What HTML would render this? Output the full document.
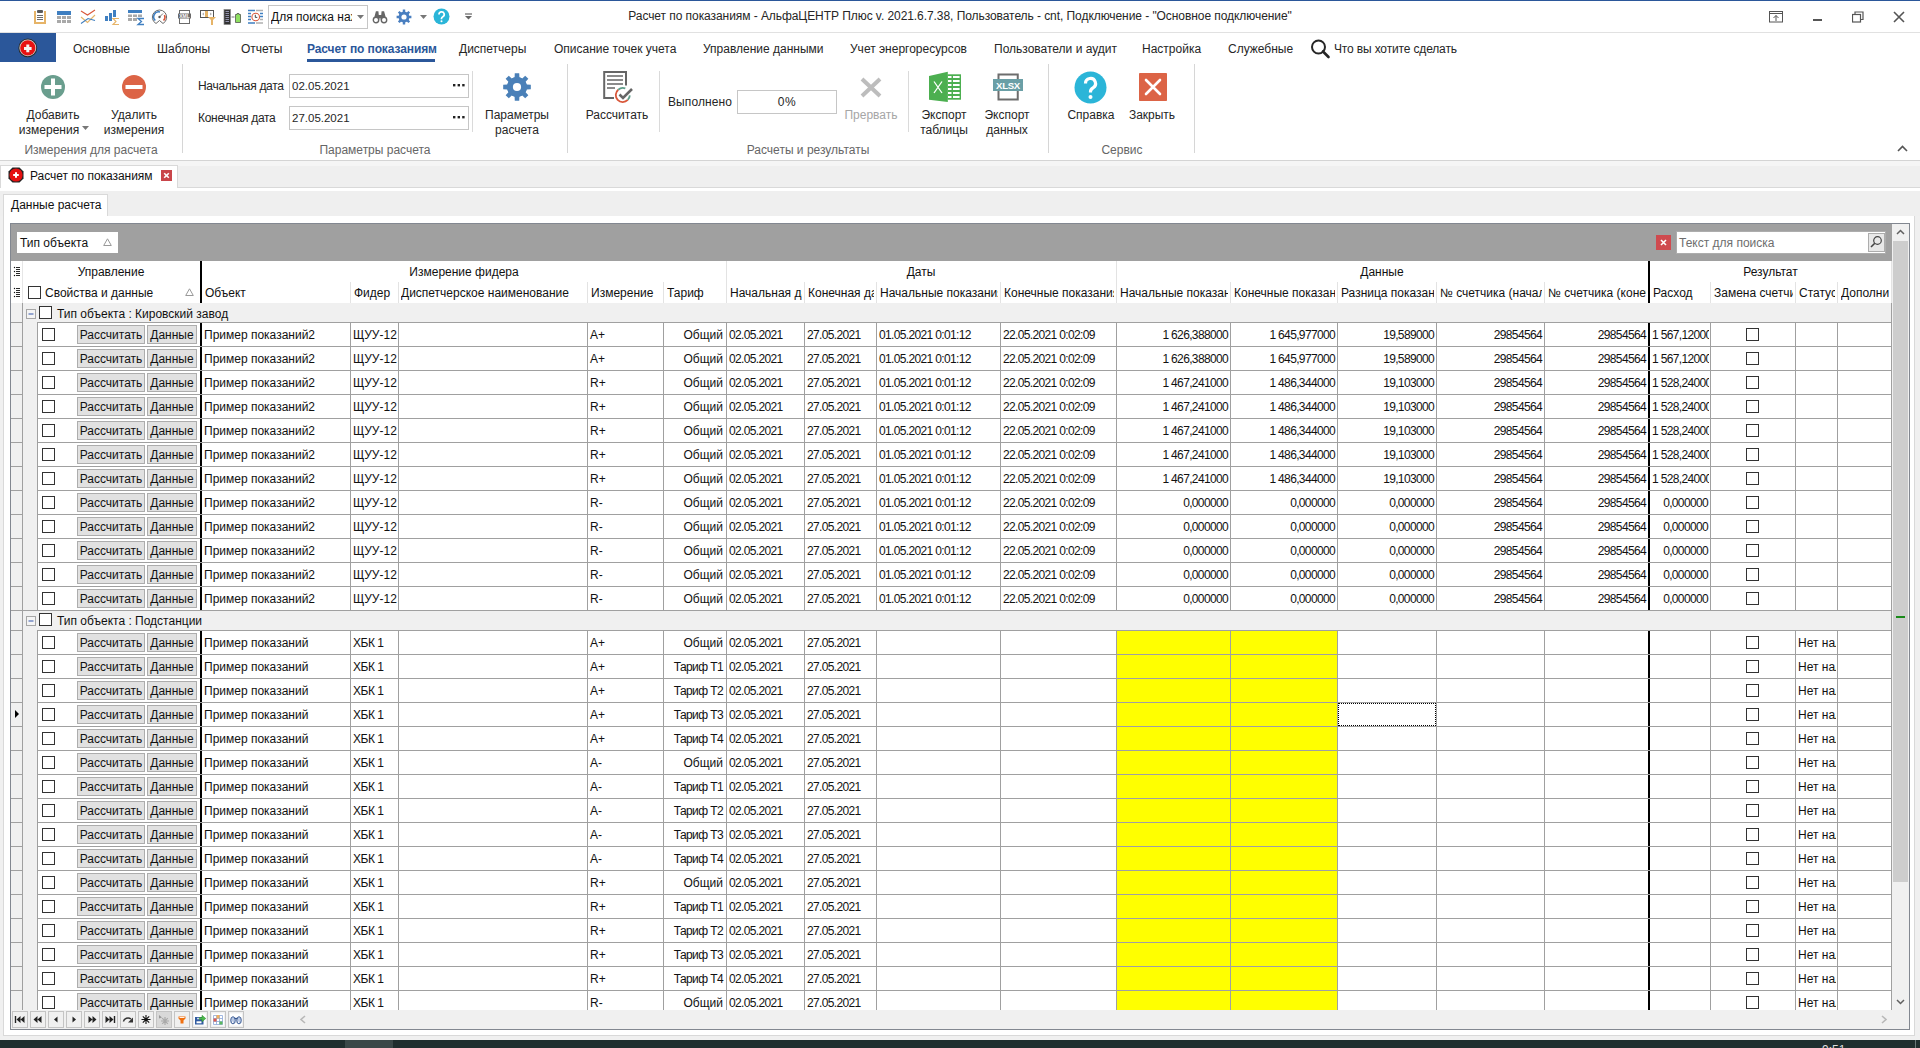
<!DOCTYPE html><html><head><meta charset="utf-8"><style>
*{margin:0;padding:0;box-sizing:content-box}
html,body{width:1920px;height:1048px;overflow:hidden;background:#f0f0f0;font-family:"Liberation Sans",sans-serif}
body>div,body>svg{position:absolute}
div div,div svg{position:absolute}
.t{position:absolute;white-space:nowrap;font-size:12px;line-height:16px;color:#111}
.n{font-size:12px;letter-spacing:-0.65px}
.btn{position:absolute;height:17px;border:1px solid #adadad;background:#e1e1e1;font-size:12px;line-height:19px;text-align:center;color:#111;white-space:nowrap;overflow:hidden}
</style></head><body>
<div style="left:0;top:161px;width:1920px;height:5px;background:#f5f5f5"></div>
<div style="left:0;top:166px;width:1920px;height:22px;background:#efefef"></div>
<div style="left:0;top:187px;width:1920px;height:1px;background:#d9d9d9"></div>
<div style="left:0;top:165px;width:177px;height:23px;background:#fff;border-top:1px solid #d9d9d9;border-right:1px solid #d9d9d9"></div>
<div style="left:0;top:165px;width:1px;height:24px;background:#d9d9d9"></div>
<svg style="left:7px;top:166px" width="18" height="18" viewBox="0 0 18 18"><path d="M5.5 1.5h7l4 4v7l-4 4h-7l-4-4v-7z" fill="#222"/><circle cx="9" cy="9" r="6.6" fill="#e51010"/><path d="M8 6.2h2v1.8h1.8v2H10v1.8H8V10H6.2V8H8z" fill="#fff"/></svg>
<div class="t" style="left:30px;top:168px;font-size:12px;color:#111;letter-spacing:-0.05px">Расчет по показаниям</div>
<svg style="left:161px;top:170px" width="11" height="11" viewBox="0 0 11 11"><rect width="11" height="11" fill="#c9454a"/><path d="M3.2 3.2l4.6 4.6M7.8 3.2L3.2 7.8" stroke="#fff" stroke-width="1.6"/></svg>
<div style="left:0;top:188px;width:1920px;height:3px;background:#fff"></div>
<div style="left:0;top:191px;width:1920px;height:25px;background:#efefef"></div>
<div style="left:3px;top:216px;width:1912px;height:1px;background:#d9d9d9"></div>
<div style="left:3px;top:194px;width:103px;height:23px;background:#fff;border:1px solid #d9d9d9;border-bottom:none"></div>
<div class="t" style="left:11px;top:197px;font-size:12px;color:#111">Данные расчета</div>
<div style="left:3px;top:216px;width:1910px;height:819px;background:#fff;border:1px solid #d9d9d9;border-top:none"></div>
<div style="left:0;top:1040px;width:1920px;height:8px;background:#1f2e2e"></div>
<div style="left:345px;top:1040px;width:48px;height:8px;background:#3a4848"></div>
<div style="left:1915px;top:1040px;width:1px;height:8px;background:#6a7878"></div>
<div class="t" style="left:1822px;top:1042px;font-size:12px;color:#ddd">9:51</div>
<div style="left:0;top:0;width:1920px;height:1px;background:#2b579a"></div>
<div style="left:0;top:1px;width:1920px;height:159px;background:#fff"></div>
<div style="left:0;top:32px;width:1920px;height:1px;background:#e1e1e1"></div>
<div style="left:0;top:160px;width:1920px;height:1px;background:#d4d4d4"></div>
<div class="t" style="left:460px;top:8px;width:1000px;text-align:center;font-size:12px;color:#262626;letter-spacing:-0.065px">Расчет по показаниям - АльфаЦЕНТР Плюс v. 2021.6.7.38, Пользователь - cnt, Подключение - "Основное подключение"</div>
<div style="left:0;top:33px;width:56px;height:29px;background:#2b579a"></div>
<svg style="left:18px;top:38px" width="20" height="20" viewBox="0 0 20 20"><circle cx="9.8" cy="9.9" r="9.4" fill="#2a2a2a"/><circle cx="9.8" cy="9.9" r="8.4" fill="#d8d8d8"/><circle cx="9.8" cy="9.9" r="7.6" fill="#e81212"/><path d="M8.3 6.6h3v2.3h2.3v3h-2.3v2.3h-3v-2.3H6v-3h2.3z" fill="#f4f4f4"/></svg>
<div class="t" style="left:73px;top:41px;font-size:12px;color:#262626">Основные</div>
<div class="t" style="left:157px;top:41px;font-size:12px;color:#262626">Шаблоны</div>
<div class="t" style="left:241px;top:41px;font-size:12px;color:#262626">Отчеты</div>
<div class="t" style="left:459px;top:41px;font-size:12px;color:#262626">Диспетчеры</div>
<div class="t" style="left:554px;top:41px;font-size:12px;color:#262626">Описание точек учета</div>
<div class="t" style="left:703px;top:41px;font-size:12px;color:#262626">Управление данными</div>
<div class="t" style="left:850px;top:41px;font-size:12px;color:#262626">Учет энергоресурсов</div>
<div class="t" style="left:994px;top:41px;font-size:12px;color:#262626">Пользователи и аудит</div>
<div class="t" style="left:1142px;top:41px;font-size:12px;color:#262626">Настройка</div>
<div class="t" style="left:1228px;top:41px;font-size:12px;color:#262626">Служебные</div>
<div class="t" style="left:307px;top:41px;font-size:12px;color:#2b579a;font-weight:bold;letter-spacing:-0.1px">Расчет по показаниям</div>
<div style="left:307px;top:59px;width:128px;height:3px;background:#2b579a"></div>
<svg style="left:1310px;top:39px" width="22" height="20" viewBox="0 0 22 20"><circle cx="8.5" cy="8" r="6.5" fill="none" stroke="#262626" stroke-width="2"/><path d="M13 12.5l5.5 5.5" stroke="#262626" stroke-width="2.6" stroke-linecap="round"/></svg>
<div class="t" style="left:1334px;top:41px;font-size:12px;color:#262626;letter-spacing:-0.15px">Что вы хотите сделать</div>
<div style="left:182px;top:64px;width:1px;height:89px;background:#d6d6d6"></div>
<div style="left:567px;top:64px;width:1px;height:89px;background:#d6d6d6"></div>
<div style="left:1048px;top:64px;width:1px;height:89px;background:#d6d6d6"></div>
<div style="left:1194px;top:64px;width:1px;height:89px;background:#d6d6d6"></div>
<div style="left:472px;top:71px;width:1px;height:61px;background:#dadada"></div>
<div style="left:659px;top:71px;width:1px;height:61px;background:#dadada"></div>
<div style="left:908px;top:71px;width:1px;height:61px;background:#dadada"></div>
<div class="t" style="left:-59px;top:142px;width:300px;text-align:center;font-size:12px;color:#666">Измерения для расчета</div>
<div class="t" style="left:225px;top:142px;width:300px;text-align:center;font-size:12px;color:#666">Параметры расчета</div>
<div class="t" style="left:658px;top:142px;width:300px;text-align:center;font-size:12px;color:#666">Расчеты и результаты</div>
<div class="t" style="left:972px;top:142px;width:300px;text-align:center;font-size:12px;color:#666">Сервис</div>
<svg style="left:40px;top:74px" width="26" height="26" viewBox="0 0 26 26"><circle cx="13" cy="13" r="12" fill="#6a9e8e"/><rect x="4.5" y="11" width="17" height="4" fill="#fff"/><rect x="11" y="4.5" width="4" height="17" fill="#fff"/></svg>
<div class="t" style="left:-97px;top:107px;width:300px;text-align:center;font-size:12px;color:#262626">Добавить</div>
<div class="t" style="left:-101px;top:122px;width:300px;text-align:center;font-size:12px;color:#262626">измерения</div>
<svg style="left:82px;top:126px" width="7" height="4" viewBox="0 0 7 4"><path d="M0 0h7L3.5 4z" fill="#777"/></svg>
<svg style="left:121px;top:74px" width="26" height="26" viewBox="0 0 26 26"><circle cx="13" cy="13" r="12" fill="#dc6446"/><rect x="4.5" y="11" width="17" height="4" fill="#fff"/></svg>
<div class="t" style="left:-16px;top:107px;width:300px;text-align:center;font-size:12px;color:#262626">Удалить</div>
<div class="t" style="left:-16px;top:122px;width:300px;text-align:center;font-size:12px;color:#262626">измерения</div>
<div class="t" style="left:198px;top:78px;font-size:12px;color:#262626;letter-spacing:-0.3px">Начальная дата</div>
<div class="t" style="left:198px;top:110px;font-size:12px;color:#262626;letter-spacing:-0.3px">Конечная дата</div>
<div style="left:289px;top:74px;width:178px;height:22px;border:1px solid #c6c6c6;background:#fff"></div>
<div class="t num" style="left:292px;top:78px;font-size:11.5px;color:#262626">02.05.2021</div>
<svg style="left:453px;top:84px" width="12" height="3" viewBox="0 0 12 3"><rect x="0" y="0" width="2.4" height="2.4" fill="#222"/><rect x="4.6" y="0" width="2.4" height="2.4" fill="#222"/><rect x="9.2" y="0" width="2.4" height="2.4" fill="#222"/></svg>
<div style="left:289px;top:106px;width:178px;height:22px;border:1px solid #c6c6c6;background:#fff"></div>
<div class="t num" style="left:292px;top:110px;font-size:11.5px;color:#262626">27.05.2021</div>
<svg style="left:453px;top:116px" width="12" height="3" viewBox="0 0 12 3"><rect x="0" y="0" width="2.4" height="2.4" fill="#222"/><rect x="4.6" y="0" width="2.4" height="2.4" fill="#222"/><rect x="9.2" y="0" width="2.4" height="2.4" fill="#222"/></svg>
<svg style="left:502px;top:72px" width="30" height="30" viewBox="0 0 30 30"><path d="M24.79 12.60 L28.82 12.77 L28.82 17.23 L24.79 17.40 L23.62 20.23 L26.35 23.20 L23.20 26.35 L20.23 23.62 L17.40 24.79 L17.23 28.82 L12.77 28.82 L12.60 24.79 L9.77 23.62 L6.80 26.35 L3.65 23.20 L6.38 20.23 L5.21 17.40 L1.18 17.23 L1.18 12.77 L5.21 12.60 L6.38 9.77 L3.65 6.80 L6.80 3.65 L9.77 6.38 L12.60 5.21 L12.77 1.18 L17.23 1.18 L17.40 5.21 L20.23 6.38 L23.20 3.65 L26.35 6.80 L23.62 9.77Z" fill="#4a80b8"/><circle cx="15" cy="15" r="9.88" fill="#4a80b8"/><circle cx="15" cy="15" r="4.1" fill="#fff"/></svg>
<div class="t" style="left:367px;top:107px;width:300px;text-align:center;font-size:12px;color:#262626">Параметры</div>
<div class="t" style="left:367px;top:122px;width:300px;text-align:center;font-size:12px;color:#262626">расчета</div>
<svg style="left:600px;top:70px" width="34" height="34" viewBox="0 0 34 34"><path d="M14 28H4.2V2H26v13.5" fill="none" stroke="#666" stroke-width="2"/><path d="M7 6h16M7 10h16M7 14h16M7 18h8" stroke="#666" stroke-width="1.6"/><path d="M27.75 29.95A7 7 0 1 1 18.21 19.72" fill="none" stroke="#d9573a" stroke-width="1.8"/><path d="M18.21 19.72A7 7 0 0 1 25.31 18.46" fill="none" stroke="#5f9e8a" stroke-width="1.8"/><path d="M29.79 25.37A7 7 0 0 1 27.75 29.95" fill="none" stroke="#5f9e8a" stroke-width="1.8"/><path d="M19.5 24.5l3.5 3.5 9-9" fill="none" stroke="#666" stroke-width="2.6"/></svg>
<div class="t" style="left:467px;top:107px;width:300px;text-align:center;font-size:12px;color:#262626">Рассчитать</div>
<div class="t" style="left:668px;top:94px;font-size:12px;color:#262626;letter-spacing:0.1px">Выполнено</div>
<div style="left:737px;top:90px;width:98px;height:22px;border:1px solid #c6c6c6;background:#fff"></div>
<div class="t" style="left:737px;top:94px;width:100px;text-align:center;font-size:12px;color:#262626;letter-spacing:0.5px">0%</div>
<svg style="left:860px;top:77px" width="22" height="21" viewBox="0 0 22 21"><path d="M2 2l18 17M20 2L2 19" stroke="#bdbdbd" stroke-width="4"/></svg>
<div class="t" style="left:721px;top:107px;width:300px;text-align:center;font-size:12px;color:#a6a6a6">Прервать</div>
<svg style="left:928px;top:71px" width="34" height="32" viewBox="0 0 34 32"><rect x="19.5" y="3.3" width="13.5" height="25.4" fill="#4caf50"/><path d="M20 5h3.5v2H20zM25 5h6.6v2H25zM20 9h3.5v2H20zM25 9h6.6v2H25zM20 13h3.5v2H20zM25 13h6.6v2H25zM20 17h3.5v2H20zM25 17h6.6v2H25zM20 21h3.5v2H20zM25 21h6.6v2H25zM20 25h3.5v2H20zM25 25h6.6v2H25z" fill="#fff"/><path d="M1 5L19.8 0.8V30.9L1 28.7z" fill="#4caf50"/><path d="M6 10.5l8 11.5M14 10.5l-8 11.5" stroke="#fff" stroke-width="1.3"/></svg>
<div class="t" style="left:794px;top:107px;width:300px;text-align:center;font-size:12px;color:#262626">Экспорт</div>
<div class="t" style="left:794px;top:122px;width:300px;text-align:center;font-size:12px;color:#262626">таблицы</div>
<svg style="left:991px;top:72px" width="34" height="30" viewBox="0 0 34 30"><rect x="7.5" y="2.5" width="19.25" height="25" fill="#fff" stroke="#6d6d6d" stroke-width="2"/><rect x="2" y="7" width="30" height="12" fill="#6a9fa6"/><text x="17" y="17.3" font-family="Liberation Sans" font-weight="bold" font-size="9.6" letter-spacing="-0.3" fill="#fff" text-anchor="middle">XLSX</text></svg>
<div class="t" style="left:857px;top:107px;width:300px;text-align:center;font-size:12px;color:#262626">Экспорт</div>
<div class="t" style="left:857px;top:122px;width:300px;text-align:center;font-size:12px;color:#262626">данных</div>
<svg style="left:1074px;top:71px" width="33" height="33" viewBox="0 0 33 33"><circle cx="16.5" cy="16.5" r="16" fill="#2bb5d8"/><path d="M11.5 12.5a5 5 0 1 1 7.5 4.3c-1.6 1-2.5 1.8-2.5 3.7v1" fill="none" stroke="#fff" stroke-width="3.2"/><circle cx="16.5" cy="26" r="2" fill="#fff"/></svg>
<div class="t" style="left:941px;top:107px;width:300px;text-align:center;font-size:12px;color:#262626">Справка</div>
<svg style="left:1139px;top:73px" width="28" height="28" viewBox="0 0 28 28"><rect x="0" y="0" width="28" height="28" rx="0.8" fill="#dc6446"/><path d="M7 7l14 14M21 7L7 21" stroke="#fff" stroke-width="2.6" stroke-linecap="round"/></svg>
<div class="t" style="left:1002px;top:107px;width:300px;text-align:center;font-size:12px;color:#262626">Закрыть</div>
<svg style="left:1897px;top:145px" width="11" height="7" viewBox="0 0 11 7"><path d="M1 6l4.5-4.5L10 6" fill="none" stroke="#555" stroke-width="1.6"/></svg>
<svg style="left:28px;top:4px" width="120" height="26" viewBox="0 0 120 26"><path d="M6 7h2v11h8V7h2v13H6z" fill="#e6b468"/><rect x="9" y="6" width="6" height="3" rx="1" fill="#5a5a5a"/><path d="M9 11.5h6M9 13.5h6M9 15.5h6" stroke="#5a5a5a" stroke-width="0.9"/><rect x="29" y="7" width="14" height="4" fill="#3f7fc1"/><path d="M29 12h4v3h-4zM34 12h4v3h-4zM39 12h4v3h-4zM29 16h4v3h-4zM34 16h4v3h-4zM39 16h4v3h-4z" fill="#a9a9a9"/><path d="M53 7l6.5 4L67 6" fill="none" stroke="#d9573a" stroke-width="1.1"/><path d="M53 13l6.5 5.5L67 11" fill="none" stroke="#e6b468" stroke-width="1.1"/><path d="M53 19.5l7-5 7 2" fill="none" stroke="#3f7fc1" stroke-width="1.1"/><rect x="77" y="12" width="3" height="5" fill="#3f7fc1"/><rect x="81" y="9" width="3" height="8" fill="#3f7fc1"/><rect x="85" y="6" width="3" height="7" fill="#3f7fc1"/><path d="M91 14.5h-6l3 3-3 3h6" fill="none" stroke="#e6b468" stroke-width="1.1"/><rect x="100" y="6" width="14" height="3" fill="#3f7fc1"/><path d="M100 10.5h4v2.5h-4zM105 10.5h4v2.5h-4zM110 10.5h4v2.5h-4zM100 14h4v3h-4zM105 14h4v3h-4z" fill="#a9a9a9"/><path d="M116 14.5h-6l3.5 3-3.5 3h6" fill="none" stroke="#3f7fc1" stroke-width="1.3"/></svg>
<svg style="left:146px;top:4px" width="120" height="26" viewBox="0 0 120 26"><path d="M10 19.5L13.5 16.5 17 19.5A7.2 7.2 0 1 0 10 19.5z" fill="none" stroke="#6a6a6a" stroke-width="1"/><path d="M9.3 16.5A5 5 0 0 1 14 8" fill="none" stroke="#3f7fc1" stroke-width="1.6"/><path d="M18.5 11A5 5 0 0 1 17.5 16.5" fill="none" stroke="#d9573a" stroke-width="1.6"/><path d="M13.5 13L17 9.5" stroke="#555" stroke-width="0.8"/><circle cx="13.5" cy="13" r="1.2" fill="#555"/><rect x="33.5" y="6.5" width="10" height="13" fill="#fff" stroke="#6a6a6a" stroke-width="1"/><rect x="32" y="9.5" width="13" height="5" fill="#6a6a6a"/><text x="38.5" y="13.8" font-family="Liberation Sans" font-size="5" font-weight="bold" fill="#fff" text-anchor="middle">XML</text><rect x="54.5" y="6.5" width="13" height="7" fill="#fff" stroke="#555" stroke-width="1"/><rect x="59" y="7" width="3" height="6" fill="#e6b468"/><path d="M57.5 8.5l-1 1.5 1 1.5zM64.5 8.5l1 1.5-1 1.5z" fill="#666"/><path d="M62 13h8l-3 3v5h-2v-5z" fill="#e6b468"/><rect x="78" y="5.5" width="6.5" height="15" fill="#333" stroke="#888" stroke-width="0.7"/><path d="M79.5 7.5h3.5M79.5 9.5h3.5M79.5 11.5h3.5M79.5 13.5h3.5M79.5 15.5h3.5M79.5 17.5h3.5" stroke="#aac" stroke-width="0.8"/><path d="M85.5 13h3" stroke="#777" stroke-width="1"/><path d="M89.5 10.5h1.5v-1h2v1h1.5v8h-5z" fill="#8ee060" stroke="#444" stroke-width="0.7"/><path d="M102 6.5h7M102 9.5h3M102 12.5h3M102 15.5h3M102 19h7" stroke="#3f7fc1" stroke-width="1.6"/><path d="M110 6.5h7M114 15.5h3M110 19h7" stroke="#b0b0b0" stroke-width="1.6"/><path d="M114 9.5h3M114 12.5h3" stroke="#3f7fc1" stroke-width="1.6"/><circle cx="109.7" cy="13" r="3.8" fill="#fff" stroke="#d9573a" stroke-width="1.1"/><path d="M109.3 10.8v2.6h2" fill="none" stroke="#333" stroke-width="0.9"/></svg>
<div style="left:268px;top:5px;width:98px;height:22px;border:1px solid #c6c6c6;background:#fff"></div>
<div class="t" style="left:271px;top:9px;width:81px;overflow:hidden;font-size:12px;color:#111">Для поиска нажмите</div>
<svg style="left:357px;top:15px" width="7" height="4" viewBox="0 0 7 4"><path d="M0 0h7L3.5 4z" fill="#777"/></svg>
<svg style="left:372px;top:9px" width="16" height="15" viewBox="0 0 16 15"><path d="M1.6 11L3.9 2.2H6.4L7.3 11zM8.7 11L9.6 2.2H12.1L14.4 11z" fill="#666"/><rect x="6" y="6" width="4" height="3.5" fill="#666"/><circle cx="4" cy="11" r="2.7" fill="#fff" stroke="#666" stroke-width="1.4"/><circle cx="12" cy="11" r="2.7" fill="#fff" stroke="#666" stroke-width="1.4"/></svg>
<svg style="left:396px;top:9px" width="16" height="16" viewBox="0 0 16 16"><path d="M13.25 6.72 L15.40 6.81 L15.40 9.19 L13.25 9.28 L12.62 10.80 L14.08 12.39 L12.39 14.08 L10.80 12.62 L9.28 13.25 L9.19 15.40 L6.81 15.40 L6.72 13.25 L5.20 12.62 L3.61 14.08 L1.92 12.39 L3.38 10.80 L2.75 9.28 L0.60 9.19 L0.60 6.81 L2.75 6.72 L3.38 5.20 L1.92 3.61 L3.61 1.92 L5.20 3.38 L6.72 2.75 L6.81 0.60 L9.19 0.60 L9.28 2.75 L10.80 3.38 L12.39 1.92 L14.08 3.61 L12.62 5.20Z" fill="#4a7fc0"/><circle cx="8" cy="8" r="5.29" fill="#4a7fc0"/><circle cx="8" cy="8" r="2.6" fill="#fff"/></svg>
<svg style="left:420px;top:15px" width="7" height="4" viewBox="0 0 7 4"><path d="M0 0h7L3.5 4z" fill="#777"/></svg>
<svg style="left:433px;top:8px" width="17" height="17" viewBox="0 0 17 17"><circle cx="8.5" cy="8.5" r="8" fill="#2bb5d8"/><path d="M6 6.5a2.6 2.6 0 1 1 3.8 2.2c-0.8 0.5-1.3 0.9-1.3 1.9v0.6" fill="none" stroke="#fff" stroke-width="1.7"/><circle cx="8.5" cy="13.3" r="1" fill="#fff"/></svg>
<svg style="left:464px;top:13px" width="9" height="7" viewBox="0 0 9 7"><path d="M1 1h7" stroke="#666" stroke-width="1.2"/><path d="M1 3h7L4.5 6.5z" fill="#666"/></svg>
<svg style="left:1769px;top:11px" width="15" height="12" viewBox="0 0 15 12"><rect x="0.5" y="0.5" width="13" height="10.5" fill="none" stroke="#555" stroke-width="1"/><path d="M0.5 2.5h13" stroke="#555"/><path d="M7 10V4.5M4.5 7L7 4.5 9.5 7" fill="none" stroke="#555" stroke-width="1"/></svg>
<div style="left:1813px;top:19px;width:9px;height:1.5px;background:#555"></div>
<svg style="left:1852px;top:11px" width="12" height="12" viewBox="0 0 12 12"><rect x="0.5" y="3.5" width="8" height="7.5" fill="none" stroke="#555" stroke-width="1.2"/><path d="M3 3.5V1h8v7.5H8.5" fill="none" stroke="#555" stroke-width="1.2"/></svg>
<svg style="left:1893px;top:11px" width="12" height="12" viewBox="0 0 12 12"><path d="M1 1l10 10M11 1L1 11" stroke="#555" stroke-width="1.6"/></svg>
<div style="left:10px;top:223px;width:1898px;height:805px;border:1px solid #828790;background:#fff"></div>
<div style="left:11px;top:224px;width:1881px;height:37px;background:#a0a0a0"></div>
<div style="left:17px;top:232px;width:101px;height:21px;background:#fff"></div>
<div class="t" style="left:20px;top:235px;font-size:12px;color:#111">Тип объекта</div>
<svg style="left:103px;top:238px" width="9" height="8" viewBox="0 0 9 8"><path d="M4.5 0.8L8.3 7.5H0.7z" fill="none" stroke="#999" stroke-width="1"/></svg>
<svg style="left:1656px;top:235px" width="15" height="15" viewBox="0 0 15 15"><rect width="15" height="15" fill="#cf4a4f"/><path d="M5 5l5 5M10 5l-5 5" stroke="#fff" stroke-width="1.6"/></svg>
<div style="left:1676px;top:231px;width:208px;height:21px;border:1px solid #adadad;background:#fff"></div>
<div class="t" style="left:1679px;top:235px;font-size:12px;color:#6d6d6d">Текст для поиска</div>
<div style="left:1868px;top:233px;width:15px;height:17px;border:1px solid #adadad;background:#e8e8e8"></div>
<svg style="left:1869px;top:235px" width="14" height="14" viewBox="0 0 14 14"><circle cx="8.5" cy="5.5" r="3.8" fill="none" stroke="#444" stroke-width="1.2"/><path d="M5.8 8.2L2 12" stroke="#444" stroke-width="1.6"/></svg>
<div style="left:1892px;top:224px;width:17px;height:786px;background:#f0f0f0"></div>
<div style="left:1893px;top:241px;width:15px;height:641px;background:#cdcdcd"></div>
<svg style="left:1896px;top:229px" width="9" height="6" viewBox="0 0 9 6"><path d="M1 5l3.5-3.5L8 5" fill="none" stroke="#606060" stroke-width="1.5"/></svg>
<svg style="left:1896px;top:999px" width="9" height="6" viewBox="0 0 9 6"><path d="M1 1l3.5 3.5L8 1" fill="none" stroke="#606060" stroke-width="1.5"/></svg>
<div style="left:1896px;top:616px;width:9px;height:2px;background:#1a8a1a"></div>
<div style="left:11px;top:261px;width:1881px;height:42px;background:#fff"></div>
<svg style="left:12px;top:266px" width="10" height="11" viewBox="0 0 10 11"><circle cx="2.5" cy="1.5" r="0.7" fill="#111"/><circle cx="2.5" cy="5.5" r="0.7" fill="#111"/><circle cx="2.5" cy="9.5" r="0.7" fill="#111"/><path d="M4 1.5h4M4 3.5h4M4 5.5h4M4 7.5h4M4 9.5h4" stroke="#111" stroke-width="0.9"/></svg>
<svg style="left:12px;top:287px" width="10" height="11" viewBox="0 0 10 11"><circle cx="2.5" cy="1.5" r="0.7" fill="#111"/><circle cx="2.5" cy="5.5" r="0.7" fill="#111"/><circle cx="2.5" cy="9.5" r="0.7" fill="#111"/><path d="M4 1.5h4M4 3.5h4M4 5.5h4M4 7.5h4M4 9.5h4" stroke="#111" stroke-width="0.9"/></svg>
<div class="t" style="left:22px;top:264px;width:178px;text-align:center;font-size:12px;color:#111">Управление</div>
<div class="t" style="left:202px;top:264px;width:524px;text-align:center;font-size:12px;color:#111">Измерение фидера</div>
<div class="t" style="left:726px;top:264px;width:390px;text-align:center;font-size:12px;color:#111">Даты</div>
<div class="t" style="left:1116px;top:264px;width:532px;text-align:center;font-size:12px;color:#111">Данные</div>
<div class="t" style="left:1650px;top:264px;width:241px;text-align:center;font-size:12px;color:#111">Результат</div>
<div style="left:350px;top:282px;width:1px;height:21px;background:#e3e3e3"></div>
<div style="left:398px;top:282px;width:1px;height:21px;background:#e3e3e3"></div>
<div style="left:587px;top:282px;width:1px;height:21px;background:#e3e3e3"></div>
<div style="left:663px;top:282px;width:1px;height:21px;background:#e3e3e3"></div>
<div style="left:804px;top:282px;width:1px;height:21px;background:#e3e3e3"></div>
<div style="left:876px;top:282px;width:1px;height:21px;background:#e3e3e3"></div>
<div style="left:1000px;top:282px;width:1px;height:21px;background:#e3e3e3"></div>
<div style="left:1230px;top:282px;width:1px;height:21px;background:#e3e3e3"></div>
<div style="left:1337px;top:282px;width:1px;height:21px;background:#e3e3e3"></div>
<div style="left:1436px;top:282px;width:1px;height:21px;background:#e3e3e3"></div>
<div style="left:1544px;top:282px;width:1px;height:21px;background:#e3e3e3"></div>
<div style="left:1710px;top:282px;width:1px;height:21px;background:#e3e3e3"></div>
<div style="left:1795px;top:282px;width:1px;height:21px;background:#e3e3e3"></div>
<div style="left:1837px;top:282px;width:1px;height:21px;background:#e3e3e3"></div>
<div style="left:726px;top:261px;width:1px;height:42px;background:#e3e3e3"></div>
<div style="left:1116px;top:261px;width:1px;height:42px;background:#e3e3e3"></div>
<div style="left:1891px;top:261px;width:1px;height:42px;background:#e3e3e3"></div>
<div class="t" style="left:205px;top:285px;width:143px;overflow:hidden;font-size:12px;color:#111">Объект</div>
<div class="t" style="left:354px;top:285px;width:42px;overflow:hidden;font-size:12px;color:#111">Фидер</div>
<div class="t" style="left:401px;top:285px;width:184px;overflow:hidden;font-size:12px;color:#111">Диспетчерское наименование</div>
<div class="t" style="left:591px;top:285px;width:70px;overflow:hidden;font-size:12px;color:#111">Измерение</div>
<div class="t" style="left:667px;top:285px;width:57px;overflow:hidden;font-size:12px;color:#111">Тариф</div>
<div class="t" style="left:730px;top:285px;width:72px;overflow:hidden;font-size:12px;color:#111">Начальная дата</div>
<div class="t" style="left:808px;top:285px;width:66px;overflow:hidden;font-size:12px;color:#111">Конечная дата</div>
<div class="t" style="left:880px;top:285px;width:118px;overflow:hidden;font-size:12px;color:#111">Начальные показания</div>
<div class="t" style="left:1004px;top:285px;width:110px;overflow:hidden;font-size:12px;color:#111">Конечные показания</div>
<div class="t" style="left:1120px;top:285px;width:108px;overflow:hidden;font-size:12px;color:#111">Начальные показания</div>
<div class="t" style="left:1234px;top:285px;width:101px;overflow:hidden;font-size:12px;color:#111">Конечные показания</div>
<div class="t" style="left:1341px;top:285px;width:93px;overflow:hidden;font-size:12px;color:#111">Разница показаний</div>
<div class="t" style="left:1440px;top:285px;width:102px;overflow:hidden;font-size:12px;color:#111">№ счетчика (начальный)</div>
<div class="t" style="left:1548px;top:285px;width:98px;overflow:hidden;font-size:12px;color:#111">№ счетчика (конечный)</div>
<div class="t" style="left:1653px;top:285px;width:55px;overflow:hidden;font-size:12px;color:#111">Расход</div>
<div class="t" style="left:1714px;top:285px;width:79px;overflow:hidden;font-size:12px;color:#111">Замена счетчика</div>
<div class="t" style="left:1799px;top:285px;width:36px;overflow:hidden;font-size:12px;color:#111">Статус</div>
<div class="t" style="left:1841px;top:285px;width:48px;overflow:hidden;font-size:12px;color:#111">Дополнительно</div>
<div style="left:28px;top:286px;width:11px;height:11px;border:1px solid #333;background:#fff"></div>
<div class="t" style="left:45px;top:285px;font-size:12px;color:#111">Свойства и данные</div>
<svg style="left:185px;top:288px" width="9" height="8" viewBox="0 0 9 8"><path d="M4.5 0.8L8.3 7.5H0.7z" fill="none" stroke="#999" stroke-width="1"/></svg>
<div style="left:22px;top:261px;width:1px;height:42px;background:#e6e6e6"></div>
<div style="left:200px;top:261px;width:2px;height:42px;background:#000"></div>
<div style="left:1648px;top:261px;width:2px;height:42px;background:#000"></div>
<div style="left:11px;top:303px;width:1881px;height:707px;overflow:hidden;background:#fff">
<div style="left:0px;top:0px;width:11px;height:707px;background:#f0f0f0;"></div>
<div style="left:11px;top:0px;width:1px;height:707px;background:#a0a0a0;"></div>
<div style="left:12px;top:0px;width:1868px;height:19px;background:#f0f0f0;"></div>
<div style="left:1880px;top:0px;width:1px;height:19px;background:#a0a0a0;"></div>
<svg style="left:15px;top:6px" width="10" height="10" viewBox="0 0 10 10"><rect x="0.5" y="0.5" width="9" height="9" fill="#f4f4f4" stroke="#a6a6a6"/><path d="M2.5 5h5" stroke="#3355aa" stroke-width="1"/></svg>
<div style="left:28px;top:3px;width:11px;height:11px;background:#fff;border:1px solid #333"></div>
<div class="t" style="left:46px;top:3px;">Тип объекта : Кировский завод</div>
<div style="left:12px;top:19px;width:14px;height:288px;background:#f0f0f0;"></div>
<div style="left:26px;top:19px;width:1px;height:288px;background:#a0a0a0;"></div>
<div style="left:339px;top:19px;width:1px;height:288px;background:#a0a0a0;"></div>
<div style="left:387px;top:19px;width:1px;height:288px;background:#a0a0a0;"></div>
<div style="left:576px;top:19px;width:1px;height:288px;background:#a0a0a0;"></div>
<div style="left:652px;top:19px;width:1px;height:288px;background:#a0a0a0;"></div>
<div style="left:715px;top:19px;width:1px;height:288px;background:#a0a0a0;"></div>
<div style="left:793px;top:19px;width:1px;height:288px;background:#a0a0a0;"></div>
<div style="left:865px;top:19px;width:1px;height:288px;background:#a0a0a0;"></div>
<div style="left:989px;top:19px;width:1px;height:288px;background:#a0a0a0;"></div>
<div style="left:1105px;top:19px;width:1px;height:288px;background:#a0a0a0;"></div>
<div style="left:1219px;top:19px;width:1px;height:288px;background:#a0a0a0;"></div>
<div style="left:1326px;top:19px;width:1px;height:288px;background:#a0a0a0;"></div>
<div style="left:1425px;top:19px;width:1px;height:288px;background:#a0a0a0;"></div>
<div style="left:1533px;top:19px;width:1px;height:288px;background:#a0a0a0;"></div>
<div style="left:1699px;top:19px;width:1px;height:288px;background:#a0a0a0;"></div>
<div style="left:1784px;top:19px;width:1px;height:288px;background:#a0a0a0;"></div>
<div style="left:1826px;top:19px;width:1px;height:288px;background:#a0a0a0;"></div>
<div style="left:1880px;top:19px;width:1px;height:288px;background:#a0a0a0;"></div>
<div style="left:189px;top:19px;width:2px;height:288px;background:#000;"></div>
<div style="left:1637px;top:19px;width:2px;height:288px;background:#000;"></div>
<div style="left:12px;top:307px;width:1868px;height:20px;background:#f0f0f0;"></div>
<div style="left:1880px;top:307px;width:1px;height:20px;background:#a0a0a0;"></div>
<svg style="left:15px;top:313px" width="10" height="10" viewBox="0 0 10 10"><rect x="0.5" y="0.5" width="9" height="9" fill="#f4f4f4" stroke="#a6a6a6"/><path d="M2.5 5h5" stroke="#3355aa" stroke-width="1"/></svg>
<div style="left:28px;top:310px;width:11px;height:11px;background:#fff;border:1px solid #333"></div>
<div class="t" style="left:46px;top:310px;">Тип объекта : Подстанции</div>
<div style="left:12px;top:327px;width:14px;height:404px;background:#f0f0f0;"></div>
<div style="left:26px;top:327px;width:1px;height:404px;background:#a0a0a0;"></div>
<div style="left:339px;top:327px;width:1px;height:404px;background:#a0a0a0;"></div>
<div style="left:387px;top:327px;width:1px;height:404px;background:#a0a0a0;"></div>
<div style="left:576px;top:327px;width:1px;height:404px;background:#a0a0a0;"></div>
<div style="left:652px;top:327px;width:1px;height:404px;background:#a0a0a0;"></div>
<div style="left:715px;top:327px;width:1px;height:404px;background:#a0a0a0;"></div>
<div style="left:793px;top:327px;width:1px;height:404px;background:#a0a0a0;"></div>
<div style="left:865px;top:327px;width:1px;height:404px;background:#a0a0a0;"></div>
<div style="left:989px;top:327px;width:1px;height:404px;background:#a0a0a0;"></div>
<div style="left:1105px;top:327px;width:1px;height:404px;background:#a0a0a0;"></div>
<div style="left:1219px;top:327px;width:1px;height:404px;background:#a0a0a0;"></div>
<div style="left:1326px;top:327px;width:1px;height:404px;background:#a0a0a0;"></div>
<div style="left:1425px;top:327px;width:1px;height:404px;background:#a0a0a0;"></div>
<div style="left:1533px;top:327px;width:1px;height:404px;background:#a0a0a0;"></div>
<div style="left:1699px;top:327px;width:1px;height:404px;background:#a0a0a0;"></div>
<div style="left:1784px;top:327px;width:1px;height:404px;background:#a0a0a0;"></div>
<div style="left:1826px;top:327px;width:1px;height:404px;background:#a0a0a0;"></div>
<div style="left:1880px;top:327px;width:1px;height:404px;background:#a0a0a0;"></div>
<div style="left:189px;top:327px;width:2px;height:404px;background:#000;"></div>
<div style="left:1637px;top:327px;width:2px;height:404px;background:#000;"></div>
<div style="left:0px;top:19px;width:11px;height:1px;background:#a0a0a0;"></div>
<div style="left:26px;top:19px;width:1854px;height:1px;background:#a0a0a0;"></div>
<div style="left:0px;top:43px;width:11px;height:1px;background:#a0a0a0;"></div>
<div style="left:26px;top:43px;width:1854px;height:1px;background:#a0a0a0;"></div>
<div style="left:0px;top:67px;width:11px;height:1px;background:#a0a0a0;"></div>
<div style="left:26px;top:67px;width:1854px;height:1px;background:#a0a0a0;"></div>
<div style="left:0px;top:91px;width:11px;height:1px;background:#a0a0a0;"></div>
<div style="left:26px;top:91px;width:1854px;height:1px;background:#a0a0a0;"></div>
<div style="left:0px;top:115px;width:11px;height:1px;background:#a0a0a0;"></div>
<div style="left:26px;top:115px;width:1854px;height:1px;background:#a0a0a0;"></div>
<div style="left:0px;top:139px;width:11px;height:1px;background:#a0a0a0;"></div>
<div style="left:26px;top:139px;width:1854px;height:1px;background:#a0a0a0;"></div>
<div style="left:0px;top:163px;width:11px;height:1px;background:#a0a0a0;"></div>
<div style="left:26px;top:163px;width:1854px;height:1px;background:#a0a0a0;"></div>
<div style="left:0px;top:187px;width:11px;height:1px;background:#a0a0a0;"></div>
<div style="left:26px;top:187px;width:1854px;height:1px;background:#a0a0a0;"></div>
<div style="left:0px;top:211px;width:11px;height:1px;background:#a0a0a0;"></div>
<div style="left:26px;top:211px;width:1854px;height:1px;background:#a0a0a0;"></div>
<div style="left:0px;top:235px;width:11px;height:1px;background:#a0a0a0;"></div>
<div style="left:26px;top:235px;width:1854px;height:1px;background:#a0a0a0;"></div>
<div style="left:0px;top:259px;width:11px;height:1px;background:#a0a0a0;"></div>
<div style="left:26px;top:259px;width:1854px;height:1px;background:#a0a0a0;"></div>
<div style="left:0px;top:283px;width:11px;height:1px;background:#a0a0a0;"></div>
<div style="left:26px;top:283px;width:1854px;height:1px;background:#a0a0a0;"></div>
<div style="left:0px;top:307px;width:1880px;height:1px;background:#a0a0a0;"></div>
<div style="left:0px;top:327px;width:11px;height:1px;background:#a0a0a0;"></div>
<div style="left:26px;top:327px;width:1854px;height:1px;background:#a0a0a0;"></div>
<div style="left:0px;top:351px;width:11px;height:1px;background:#a0a0a0;"></div>
<div style="left:26px;top:351px;width:1854px;height:1px;background:#a0a0a0;"></div>
<div style="left:0px;top:375px;width:11px;height:1px;background:#a0a0a0;"></div>
<div style="left:26px;top:375px;width:1854px;height:1px;background:#a0a0a0;"></div>
<div style="left:0px;top:399px;width:11px;height:1px;background:#a0a0a0;"></div>
<div style="left:26px;top:399px;width:1854px;height:1px;background:#a0a0a0;"></div>
<div style="left:0px;top:423px;width:11px;height:1px;background:#a0a0a0;"></div>
<div style="left:26px;top:423px;width:1854px;height:1px;background:#a0a0a0;"></div>
<div style="left:0px;top:447px;width:11px;height:1px;background:#a0a0a0;"></div>
<div style="left:26px;top:447px;width:1854px;height:1px;background:#a0a0a0;"></div>
<div style="left:0px;top:471px;width:11px;height:1px;background:#a0a0a0;"></div>
<div style="left:26px;top:471px;width:1854px;height:1px;background:#a0a0a0;"></div>
<div style="left:0px;top:495px;width:11px;height:1px;background:#a0a0a0;"></div>
<div style="left:26px;top:495px;width:1854px;height:1px;background:#a0a0a0;"></div>
<div style="left:0px;top:519px;width:11px;height:1px;background:#a0a0a0;"></div>
<div style="left:26px;top:519px;width:1854px;height:1px;background:#a0a0a0;"></div>
<div style="left:0px;top:543px;width:11px;height:1px;background:#a0a0a0;"></div>
<div style="left:26px;top:543px;width:1854px;height:1px;background:#a0a0a0;"></div>
<div style="left:0px;top:567px;width:11px;height:1px;background:#a0a0a0;"></div>
<div style="left:26px;top:567px;width:1854px;height:1px;background:#a0a0a0;"></div>
<div style="left:0px;top:591px;width:11px;height:1px;background:#a0a0a0;"></div>
<div style="left:26px;top:591px;width:1854px;height:1px;background:#a0a0a0;"></div>
<div style="left:0px;top:615px;width:11px;height:1px;background:#a0a0a0;"></div>
<div style="left:26px;top:615px;width:1854px;height:1px;background:#a0a0a0;"></div>
<div style="left:0px;top:639px;width:11px;height:1px;background:#a0a0a0;"></div>
<div style="left:26px;top:639px;width:1854px;height:1px;background:#a0a0a0;"></div>
<div style="left:0px;top:663px;width:11px;height:1px;background:#a0a0a0;"></div>
<div style="left:26px;top:663px;width:1854px;height:1px;background:#a0a0a0;"></div>
<div style="left:0px;top:687px;width:11px;height:1px;background:#a0a0a0;"></div>
<div style="left:26px;top:687px;width:1854px;height:1px;background:#a0a0a0;"></div>
<div style="left:0px;top:711px;width:11px;height:1px;background:#a0a0a0;"></div>
<div style="left:26px;top:711px;width:1854px;height:1px;background:#a0a0a0;"></div>
<div style="left:31px;top:25px;width:11px;height:11px;background:#fff;border:1px solid #333"></div>
<div class="btn" style="left:66px;top:22px;width:66px">Рассчитать</div>
<div class="btn" style="left:136px;top:22px;width:48px">Данные</div>
<div class="t" style="left:193px;top:24px;">Пример показаний2</div>
<div class="t" style="left:342px;top:24px;">ЩУУ-12</div>
<div class="t" style="left:579px;top:24px;">A+</div>
<div class="t" style="left:652px;top:24px;width:60px;text-align:right;">Общий</div>
<div class="t n" style="left:718px;top:24px;">02.05.2021</div>
<div class="t n" style="left:796px;top:24px;">27.05.2021</div>
<div style="left:1735px;top:25px;width:11px;height:11px;background:#fff;border:1px solid #333"></div>
<div class="t n" style="left:868px;top:24px;">01.05.2021 0:01:12</div>
<div class="t n" style="left:992px;top:24px;">22.05.2021 0:02:09</div>
<div class="t n" style="left:1106px;top:24px;width:111px;text-align:right">1 626,388000</div>
<div class="t n" style="left:1220px;top:24px;width:104px;text-align:right">1 645,977000</div>
<div class="t n" style="left:1327px;top:24px;width:96px;text-align:right">19,589000</div>
<div class="t n" style="left:1426px;top:24px;width:105px;text-align:right">29854564</div>
<div class="t n" style="left:1534px;top:24px;width:101px;text-align:right">29854564</div>
<div class="t n" style="left:1641px;top:24px;width:57px;overflow:hidden">1 567,12000</div>
<div style="left:31px;top:49px;width:11px;height:11px;background:#fff;border:1px solid #333"></div>
<div class="btn" style="left:66px;top:46px;width:66px">Рассчитать</div>
<div class="btn" style="left:136px;top:46px;width:48px">Данные</div>
<div class="t" style="left:193px;top:48px;">Пример показаний2</div>
<div class="t" style="left:342px;top:48px;">ЩУУ-12</div>
<div class="t" style="left:579px;top:48px;">A+</div>
<div class="t" style="left:652px;top:48px;width:60px;text-align:right;">Общий</div>
<div class="t n" style="left:718px;top:48px;">02.05.2021</div>
<div class="t n" style="left:796px;top:48px;">27.05.2021</div>
<div style="left:1735px;top:49px;width:11px;height:11px;background:#fff;border:1px solid #333"></div>
<div class="t n" style="left:868px;top:48px;">01.05.2021 0:01:12</div>
<div class="t n" style="left:992px;top:48px;">22.05.2021 0:02:09</div>
<div class="t n" style="left:1106px;top:48px;width:111px;text-align:right">1 626,388000</div>
<div class="t n" style="left:1220px;top:48px;width:104px;text-align:right">1 645,977000</div>
<div class="t n" style="left:1327px;top:48px;width:96px;text-align:right">19,589000</div>
<div class="t n" style="left:1426px;top:48px;width:105px;text-align:right">29854564</div>
<div class="t n" style="left:1534px;top:48px;width:101px;text-align:right">29854564</div>
<div class="t n" style="left:1641px;top:48px;width:57px;overflow:hidden">1 567,12000</div>
<div style="left:31px;top:73px;width:11px;height:11px;background:#fff;border:1px solid #333"></div>
<div class="btn" style="left:66px;top:70px;width:66px">Рассчитать</div>
<div class="btn" style="left:136px;top:70px;width:48px">Данные</div>
<div class="t" style="left:193px;top:72px;">Пример показаний2</div>
<div class="t" style="left:342px;top:72px;">ЩУУ-12</div>
<div class="t" style="left:579px;top:72px;">R+</div>
<div class="t" style="left:652px;top:72px;width:60px;text-align:right;">Общий</div>
<div class="t n" style="left:718px;top:72px;">02.05.2021</div>
<div class="t n" style="left:796px;top:72px;">27.05.2021</div>
<div style="left:1735px;top:73px;width:11px;height:11px;background:#fff;border:1px solid #333"></div>
<div class="t n" style="left:868px;top:72px;">01.05.2021 0:01:12</div>
<div class="t n" style="left:992px;top:72px;">22.05.2021 0:02:09</div>
<div class="t n" style="left:1106px;top:72px;width:111px;text-align:right">1 467,241000</div>
<div class="t n" style="left:1220px;top:72px;width:104px;text-align:right">1 486,344000</div>
<div class="t n" style="left:1327px;top:72px;width:96px;text-align:right">19,103000</div>
<div class="t n" style="left:1426px;top:72px;width:105px;text-align:right">29854564</div>
<div class="t n" style="left:1534px;top:72px;width:101px;text-align:right">29854564</div>
<div class="t n" style="left:1641px;top:72px;width:57px;overflow:hidden">1 528,24000</div>
<div style="left:31px;top:97px;width:11px;height:11px;background:#fff;border:1px solid #333"></div>
<div class="btn" style="left:66px;top:94px;width:66px">Рассчитать</div>
<div class="btn" style="left:136px;top:94px;width:48px">Данные</div>
<div class="t" style="left:193px;top:96px;">Пример показаний2</div>
<div class="t" style="left:342px;top:96px;">ЩУУ-12</div>
<div class="t" style="left:579px;top:96px;">R+</div>
<div class="t" style="left:652px;top:96px;width:60px;text-align:right;">Общий</div>
<div class="t n" style="left:718px;top:96px;">02.05.2021</div>
<div class="t n" style="left:796px;top:96px;">27.05.2021</div>
<div style="left:1735px;top:97px;width:11px;height:11px;background:#fff;border:1px solid #333"></div>
<div class="t n" style="left:868px;top:96px;">01.05.2021 0:01:12</div>
<div class="t n" style="left:992px;top:96px;">22.05.2021 0:02:09</div>
<div class="t n" style="left:1106px;top:96px;width:111px;text-align:right">1 467,241000</div>
<div class="t n" style="left:1220px;top:96px;width:104px;text-align:right">1 486,344000</div>
<div class="t n" style="left:1327px;top:96px;width:96px;text-align:right">19,103000</div>
<div class="t n" style="left:1426px;top:96px;width:105px;text-align:right">29854564</div>
<div class="t n" style="left:1534px;top:96px;width:101px;text-align:right">29854564</div>
<div class="t n" style="left:1641px;top:96px;width:57px;overflow:hidden">1 528,24000</div>
<div style="left:31px;top:121px;width:11px;height:11px;background:#fff;border:1px solid #333"></div>
<div class="btn" style="left:66px;top:118px;width:66px">Рассчитать</div>
<div class="btn" style="left:136px;top:118px;width:48px">Данные</div>
<div class="t" style="left:193px;top:120px;">Пример показаний2</div>
<div class="t" style="left:342px;top:120px;">ЩУУ-12</div>
<div class="t" style="left:579px;top:120px;">R+</div>
<div class="t" style="left:652px;top:120px;width:60px;text-align:right;">Общий</div>
<div class="t n" style="left:718px;top:120px;">02.05.2021</div>
<div class="t n" style="left:796px;top:120px;">27.05.2021</div>
<div style="left:1735px;top:121px;width:11px;height:11px;background:#fff;border:1px solid #333"></div>
<div class="t n" style="left:868px;top:120px;">01.05.2021 0:01:12</div>
<div class="t n" style="left:992px;top:120px;">22.05.2021 0:02:09</div>
<div class="t n" style="left:1106px;top:120px;width:111px;text-align:right">1 467,241000</div>
<div class="t n" style="left:1220px;top:120px;width:104px;text-align:right">1 486,344000</div>
<div class="t n" style="left:1327px;top:120px;width:96px;text-align:right">19,103000</div>
<div class="t n" style="left:1426px;top:120px;width:105px;text-align:right">29854564</div>
<div class="t n" style="left:1534px;top:120px;width:101px;text-align:right">29854564</div>
<div class="t n" style="left:1641px;top:120px;width:57px;overflow:hidden">1 528,24000</div>
<div style="left:31px;top:145px;width:11px;height:11px;background:#fff;border:1px solid #333"></div>
<div class="btn" style="left:66px;top:142px;width:66px">Рассчитать</div>
<div class="btn" style="left:136px;top:142px;width:48px">Данные</div>
<div class="t" style="left:193px;top:144px;">Пример показаний2</div>
<div class="t" style="left:342px;top:144px;">ЩУУ-12</div>
<div class="t" style="left:579px;top:144px;">R+</div>
<div class="t" style="left:652px;top:144px;width:60px;text-align:right;">Общий</div>
<div class="t n" style="left:718px;top:144px;">02.05.2021</div>
<div class="t n" style="left:796px;top:144px;">27.05.2021</div>
<div style="left:1735px;top:145px;width:11px;height:11px;background:#fff;border:1px solid #333"></div>
<div class="t n" style="left:868px;top:144px;">01.05.2021 0:01:12</div>
<div class="t n" style="left:992px;top:144px;">22.05.2021 0:02:09</div>
<div class="t n" style="left:1106px;top:144px;width:111px;text-align:right">1 467,241000</div>
<div class="t n" style="left:1220px;top:144px;width:104px;text-align:right">1 486,344000</div>
<div class="t n" style="left:1327px;top:144px;width:96px;text-align:right">19,103000</div>
<div class="t n" style="left:1426px;top:144px;width:105px;text-align:right">29854564</div>
<div class="t n" style="left:1534px;top:144px;width:101px;text-align:right">29854564</div>
<div class="t n" style="left:1641px;top:144px;width:57px;overflow:hidden">1 528,24000</div>
<div style="left:31px;top:169px;width:11px;height:11px;background:#fff;border:1px solid #333"></div>
<div class="btn" style="left:66px;top:166px;width:66px">Рассчитать</div>
<div class="btn" style="left:136px;top:166px;width:48px">Данные</div>
<div class="t" style="left:193px;top:168px;">Пример показаний2</div>
<div class="t" style="left:342px;top:168px;">ЩУУ-12</div>
<div class="t" style="left:579px;top:168px;">R+</div>
<div class="t" style="left:652px;top:168px;width:60px;text-align:right;">Общий</div>
<div class="t n" style="left:718px;top:168px;">02.05.2021</div>
<div class="t n" style="left:796px;top:168px;">27.05.2021</div>
<div style="left:1735px;top:169px;width:11px;height:11px;background:#fff;border:1px solid #333"></div>
<div class="t n" style="left:868px;top:168px;">01.05.2021 0:01:12</div>
<div class="t n" style="left:992px;top:168px;">22.05.2021 0:02:09</div>
<div class="t n" style="left:1106px;top:168px;width:111px;text-align:right">1 467,241000</div>
<div class="t n" style="left:1220px;top:168px;width:104px;text-align:right">1 486,344000</div>
<div class="t n" style="left:1327px;top:168px;width:96px;text-align:right">19,103000</div>
<div class="t n" style="left:1426px;top:168px;width:105px;text-align:right">29854564</div>
<div class="t n" style="left:1534px;top:168px;width:101px;text-align:right">29854564</div>
<div class="t n" style="left:1641px;top:168px;width:57px;overflow:hidden">1 528,24000</div>
<div style="left:31px;top:193px;width:11px;height:11px;background:#fff;border:1px solid #333"></div>
<div class="btn" style="left:66px;top:190px;width:66px">Рассчитать</div>
<div class="btn" style="left:136px;top:190px;width:48px">Данные</div>
<div class="t" style="left:193px;top:192px;">Пример показаний2</div>
<div class="t" style="left:342px;top:192px;">ЩУУ-12</div>
<div class="t" style="left:579px;top:192px;">R-</div>
<div class="t" style="left:652px;top:192px;width:60px;text-align:right;">Общий</div>
<div class="t n" style="left:718px;top:192px;">02.05.2021</div>
<div class="t n" style="left:796px;top:192px;">27.05.2021</div>
<div style="left:1735px;top:193px;width:11px;height:11px;background:#fff;border:1px solid #333"></div>
<div class="t n" style="left:868px;top:192px;">01.05.2021 0:01:12</div>
<div class="t n" style="left:992px;top:192px;">22.05.2021 0:02:09</div>
<div class="t n" style="left:1106px;top:192px;width:111px;text-align:right">0,000000</div>
<div class="t n" style="left:1220px;top:192px;width:104px;text-align:right">0,000000</div>
<div class="t n" style="left:1327px;top:192px;width:96px;text-align:right">0,000000</div>
<div class="t n" style="left:1426px;top:192px;width:105px;text-align:right">29854564</div>
<div class="t n" style="left:1534px;top:192px;width:101px;text-align:right">29854564</div>
<div class="t n" style="left:1640px;top:192px;width:57px;text-align:right">0,000000</div>
<div style="left:31px;top:217px;width:11px;height:11px;background:#fff;border:1px solid #333"></div>
<div class="btn" style="left:66px;top:214px;width:66px">Рассчитать</div>
<div class="btn" style="left:136px;top:214px;width:48px">Данные</div>
<div class="t" style="left:193px;top:216px;">Пример показаний2</div>
<div class="t" style="left:342px;top:216px;">ЩУУ-12</div>
<div class="t" style="left:579px;top:216px;">R-</div>
<div class="t" style="left:652px;top:216px;width:60px;text-align:right;">Общий</div>
<div class="t n" style="left:718px;top:216px;">02.05.2021</div>
<div class="t n" style="left:796px;top:216px;">27.05.2021</div>
<div style="left:1735px;top:217px;width:11px;height:11px;background:#fff;border:1px solid #333"></div>
<div class="t n" style="left:868px;top:216px;">01.05.2021 0:01:12</div>
<div class="t n" style="left:992px;top:216px;">22.05.2021 0:02:09</div>
<div class="t n" style="left:1106px;top:216px;width:111px;text-align:right">0,000000</div>
<div class="t n" style="left:1220px;top:216px;width:104px;text-align:right">0,000000</div>
<div class="t n" style="left:1327px;top:216px;width:96px;text-align:right">0,000000</div>
<div class="t n" style="left:1426px;top:216px;width:105px;text-align:right">29854564</div>
<div class="t n" style="left:1534px;top:216px;width:101px;text-align:right">29854564</div>
<div class="t n" style="left:1640px;top:216px;width:57px;text-align:right">0,000000</div>
<div style="left:31px;top:241px;width:11px;height:11px;background:#fff;border:1px solid #333"></div>
<div class="btn" style="left:66px;top:238px;width:66px">Рассчитать</div>
<div class="btn" style="left:136px;top:238px;width:48px">Данные</div>
<div class="t" style="left:193px;top:240px;">Пример показаний2</div>
<div class="t" style="left:342px;top:240px;">ЩУУ-12</div>
<div class="t" style="left:579px;top:240px;">R-</div>
<div class="t" style="left:652px;top:240px;width:60px;text-align:right;">Общий</div>
<div class="t n" style="left:718px;top:240px;">02.05.2021</div>
<div class="t n" style="left:796px;top:240px;">27.05.2021</div>
<div style="left:1735px;top:241px;width:11px;height:11px;background:#fff;border:1px solid #333"></div>
<div class="t n" style="left:868px;top:240px;">01.05.2021 0:01:12</div>
<div class="t n" style="left:992px;top:240px;">22.05.2021 0:02:09</div>
<div class="t n" style="left:1106px;top:240px;width:111px;text-align:right">0,000000</div>
<div class="t n" style="left:1220px;top:240px;width:104px;text-align:right">0,000000</div>
<div class="t n" style="left:1327px;top:240px;width:96px;text-align:right">0,000000</div>
<div class="t n" style="left:1426px;top:240px;width:105px;text-align:right">29854564</div>
<div class="t n" style="left:1534px;top:240px;width:101px;text-align:right">29854564</div>
<div class="t n" style="left:1640px;top:240px;width:57px;text-align:right">0,000000</div>
<div style="left:31px;top:265px;width:11px;height:11px;background:#fff;border:1px solid #333"></div>
<div class="btn" style="left:66px;top:262px;width:66px">Рассчитать</div>
<div class="btn" style="left:136px;top:262px;width:48px">Данные</div>
<div class="t" style="left:193px;top:264px;">Пример показаний2</div>
<div class="t" style="left:342px;top:264px;">ЩУУ-12</div>
<div class="t" style="left:579px;top:264px;">R-</div>
<div class="t" style="left:652px;top:264px;width:60px;text-align:right;">Общий</div>
<div class="t n" style="left:718px;top:264px;">02.05.2021</div>
<div class="t n" style="left:796px;top:264px;">27.05.2021</div>
<div style="left:1735px;top:265px;width:11px;height:11px;background:#fff;border:1px solid #333"></div>
<div class="t n" style="left:868px;top:264px;">01.05.2021 0:01:12</div>
<div class="t n" style="left:992px;top:264px;">22.05.2021 0:02:09</div>
<div class="t n" style="left:1106px;top:264px;width:111px;text-align:right">0,000000</div>
<div class="t n" style="left:1220px;top:264px;width:104px;text-align:right">0,000000</div>
<div class="t n" style="left:1327px;top:264px;width:96px;text-align:right">0,000000</div>
<div class="t n" style="left:1426px;top:264px;width:105px;text-align:right">29854564</div>
<div class="t n" style="left:1534px;top:264px;width:101px;text-align:right">29854564</div>
<div class="t n" style="left:1640px;top:264px;width:57px;text-align:right">0,000000</div>
<div style="left:31px;top:289px;width:11px;height:11px;background:#fff;border:1px solid #333"></div>
<div class="btn" style="left:66px;top:286px;width:66px">Рассчитать</div>
<div class="btn" style="left:136px;top:286px;width:48px">Данные</div>
<div class="t" style="left:193px;top:288px;">Пример показаний2</div>
<div class="t" style="left:342px;top:288px;">ЩУУ-12</div>
<div class="t" style="left:579px;top:288px;">R-</div>
<div class="t" style="left:652px;top:288px;width:60px;text-align:right;">Общий</div>
<div class="t n" style="left:718px;top:288px;">02.05.2021</div>
<div class="t n" style="left:796px;top:288px;">27.05.2021</div>
<div style="left:1735px;top:289px;width:11px;height:11px;background:#fff;border:1px solid #333"></div>
<div class="t n" style="left:868px;top:288px;">01.05.2021 0:01:12</div>
<div class="t n" style="left:992px;top:288px;">22.05.2021 0:02:09</div>
<div class="t n" style="left:1106px;top:288px;width:111px;text-align:right">0,000000</div>
<div class="t n" style="left:1220px;top:288px;width:104px;text-align:right">0,000000</div>
<div class="t n" style="left:1327px;top:288px;width:96px;text-align:right">0,000000</div>
<div class="t n" style="left:1426px;top:288px;width:105px;text-align:right">29854564</div>
<div class="t n" style="left:1534px;top:288px;width:101px;text-align:right">29854564</div>
<div class="t n" style="left:1640px;top:288px;width:57px;text-align:right">0,000000</div>
<div style="left:1106px;top:328px;width:113px;height:23px;background:#ffff00;"></div>
<div style="left:1220px;top:328px;width:106px;height:23px;background:#ffff00;"></div>
<div style="left:31px;top:333px;width:11px;height:11px;background:#fff;border:1px solid #333"></div>
<div class="btn" style="left:66px;top:330px;width:66px">Рассчитать</div>
<div class="btn" style="left:136px;top:330px;width:48px">Данные</div>
<div class="t" style="left:193px;top:332px;">Пример показаний</div>
<div class="t" style="left:342px;top:332px;letter-spacing:-0.5px">ХБК 1</div>
<div class="t" style="left:579px;top:332px;">A+</div>
<div class="t" style="left:652px;top:332px;width:60px;text-align:right;">Общий</div>
<div class="t n" style="left:718px;top:332px;">02.05.2021</div>
<div class="t n" style="left:796px;top:332px;">27.05.2021</div>
<div style="left:1735px;top:333px;width:11px;height:11px;background:#fff;border:1px solid #333"></div>
<div class="t" style="left:1787px;top:332px;width:38px;overflow:hidden">Нет наличия</div>
<div style="left:1106px;top:352px;width:113px;height:23px;background:#ffff00;"></div>
<div style="left:1220px;top:352px;width:106px;height:23px;background:#ffff00;"></div>
<div style="left:31px;top:357px;width:11px;height:11px;background:#fff;border:1px solid #333"></div>
<div class="btn" style="left:66px;top:354px;width:66px">Рассчитать</div>
<div class="btn" style="left:136px;top:354px;width:48px">Данные</div>
<div class="t" style="left:193px;top:356px;">Пример показаний</div>
<div class="t" style="left:342px;top:356px;letter-spacing:-0.5px">ХБК 1</div>
<div class="t" style="left:579px;top:356px;">A+</div>
<div class="t" style="left:652px;top:356px;width:60px;text-align:right;letter-spacing:-0.6px">Тариф Т1</div>
<div class="t n" style="left:718px;top:356px;">02.05.2021</div>
<div class="t n" style="left:796px;top:356px;">27.05.2021</div>
<div style="left:1735px;top:357px;width:11px;height:11px;background:#fff;border:1px solid #333"></div>
<div class="t" style="left:1787px;top:356px;width:38px;overflow:hidden">Нет наличия</div>
<div style="left:1106px;top:376px;width:113px;height:23px;background:#ffff00;"></div>
<div style="left:1220px;top:376px;width:106px;height:23px;background:#ffff00;"></div>
<div style="left:31px;top:381px;width:11px;height:11px;background:#fff;border:1px solid #333"></div>
<div class="btn" style="left:66px;top:378px;width:66px">Рассчитать</div>
<div class="btn" style="left:136px;top:378px;width:48px">Данные</div>
<div class="t" style="left:193px;top:380px;">Пример показаний</div>
<div class="t" style="left:342px;top:380px;letter-spacing:-0.5px">ХБК 1</div>
<div class="t" style="left:579px;top:380px;">A+</div>
<div class="t" style="left:652px;top:380px;width:60px;text-align:right;letter-spacing:-0.6px">Тариф Т2</div>
<div class="t n" style="left:718px;top:380px;">02.05.2021</div>
<div class="t n" style="left:796px;top:380px;">27.05.2021</div>
<div style="left:1735px;top:381px;width:11px;height:11px;background:#fff;border:1px solid #333"></div>
<div class="t" style="left:1787px;top:380px;width:38px;overflow:hidden">Нет наличия</div>
<div style="left:1106px;top:400px;width:113px;height:23px;background:#ffff00;"></div>
<div style="left:1220px;top:400px;width:106px;height:23px;background:#ffff00;"></div>
<div style="left:31px;top:405px;width:11px;height:11px;background:#fff;border:1px solid #333"></div>
<div class="btn" style="left:66px;top:402px;width:66px">Рассчитать</div>
<div class="btn" style="left:136px;top:402px;width:48px">Данные</div>
<div class="t" style="left:193px;top:404px;">Пример показаний</div>
<div class="t" style="left:342px;top:404px;letter-spacing:-0.5px">ХБК 1</div>
<div class="t" style="left:579px;top:404px;">A+</div>
<div class="t" style="left:652px;top:404px;width:60px;text-align:right;letter-spacing:-0.6px">Тариф Т3</div>
<div class="t n" style="left:718px;top:404px;">02.05.2021</div>
<div class="t n" style="left:796px;top:404px;">27.05.2021</div>
<div style="left:1735px;top:405px;width:11px;height:11px;background:#fff;border:1px solid #333"></div>
<div class="t" style="left:1787px;top:404px;width:38px;overflow:hidden">Нет наличия</div>
<div style="left:1106px;top:424px;width:113px;height:23px;background:#ffff00;"></div>
<div style="left:1220px;top:424px;width:106px;height:23px;background:#ffff00;"></div>
<div style="left:31px;top:429px;width:11px;height:11px;background:#fff;border:1px solid #333"></div>
<div class="btn" style="left:66px;top:426px;width:66px">Рассчитать</div>
<div class="btn" style="left:136px;top:426px;width:48px">Данные</div>
<div class="t" style="left:193px;top:428px;">Пример показаний</div>
<div class="t" style="left:342px;top:428px;letter-spacing:-0.5px">ХБК 1</div>
<div class="t" style="left:579px;top:428px;">A+</div>
<div class="t" style="left:652px;top:428px;width:60px;text-align:right;letter-spacing:-0.6px">Тариф Т4</div>
<div class="t n" style="left:718px;top:428px;">02.05.2021</div>
<div class="t n" style="left:796px;top:428px;">27.05.2021</div>
<div style="left:1735px;top:429px;width:11px;height:11px;background:#fff;border:1px solid #333"></div>
<div class="t" style="left:1787px;top:428px;width:38px;overflow:hidden">Нет наличия</div>
<div style="left:1106px;top:448px;width:113px;height:23px;background:#ffff00;"></div>
<div style="left:1220px;top:448px;width:106px;height:23px;background:#ffff00;"></div>
<div style="left:31px;top:453px;width:11px;height:11px;background:#fff;border:1px solid #333"></div>
<div class="btn" style="left:66px;top:450px;width:66px">Рассчитать</div>
<div class="btn" style="left:136px;top:450px;width:48px">Данные</div>
<div class="t" style="left:193px;top:452px;">Пример показаний</div>
<div class="t" style="left:342px;top:452px;letter-spacing:-0.5px">ХБК 1</div>
<div class="t" style="left:579px;top:452px;">A-</div>
<div class="t" style="left:652px;top:452px;width:60px;text-align:right;">Общий</div>
<div class="t n" style="left:718px;top:452px;">02.05.2021</div>
<div class="t n" style="left:796px;top:452px;">27.05.2021</div>
<div style="left:1735px;top:453px;width:11px;height:11px;background:#fff;border:1px solid #333"></div>
<div class="t" style="left:1787px;top:452px;width:38px;overflow:hidden">Нет наличия</div>
<div style="left:1106px;top:472px;width:113px;height:23px;background:#ffff00;"></div>
<div style="left:1220px;top:472px;width:106px;height:23px;background:#ffff00;"></div>
<div style="left:31px;top:477px;width:11px;height:11px;background:#fff;border:1px solid #333"></div>
<div class="btn" style="left:66px;top:474px;width:66px">Рассчитать</div>
<div class="btn" style="left:136px;top:474px;width:48px">Данные</div>
<div class="t" style="left:193px;top:476px;">Пример показаний</div>
<div class="t" style="left:342px;top:476px;letter-spacing:-0.5px">ХБК 1</div>
<div class="t" style="left:579px;top:476px;">A-</div>
<div class="t" style="left:652px;top:476px;width:60px;text-align:right;letter-spacing:-0.6px">Тариф Т1</div>
<div class="t n" style="left:718px;top:476px;">02.05.2021</div>
<div class="t n" style="left:796px;top:476px;">27.05.2021</div>
<div style="left:1735px;top:477px;width:11px;height:11px;background:#fff;border:1px solid #333"></div>
<div class="t" style="left:1787px;top:476px;width:38px;overflow:hidden">Нет наличия</div>
<div style="left:1106px;top:496px;width:113px;height:23px;background:#ffff00;"></div>
<div style="left:1220px;top:496px;width:106px;height:23px;background:#ffff00;"></div>
<div style="left:31px;top:501px;width:11px;height:11px;background:#fff;border:1px solid #333"></div>
<div class="btn" style="left:66px;top:498px;width:66px">Рассчитать</div>
<div class="btn" style="left:136px;top:498px;width:48px">Данные</div>
<div class="t" style="left:193px;top:500px;">Пример показаний</div>
<div class="t" style="left:342px;top:500px;letter-spacing:-0.5px">ХБК 1</div>
<div class="t" style="left:579px;top:500px;">A-</div>
<div class="t" style="left:652px;top:500px;width:60px;text-align:right;letter-spacing:-0.6px">Тариф Т2</div>
<div class="t n" style="left:718px;top:500px;">02.05.2021</div>
<div class="t n" style="left:796px;top:500px;">27.05.2021</div>
<div style="left:1735px;top:501px;width:11px;height:11px;background:#fff;border:1px solid #333"></div>
<div class="t" style="left:1787px;top:500px;width:38px;overflow:hidden">Нет наличия</div>
<div style="left:1106px;top:520px;width:113px;height:23px;background:#ffff00;"></div>
<div style="left:1220px;top:520px;width:106px;height:23px;background:#ffff00;"></div>
<div style="left:31px;top:525px;width:11px;height:11px;background:#fff;border:1px solid #333"></div>
<div class="btn" style="left:66px;top:522px;width:66px">Рассчитать</div>
<div class="btn" style="left:136px;top:522px;width:48px">Данные</div>
<div class="t" style="left:193px;top:524px;">Пример показаний</div>
<div class="t" style="left:342px;top:524px;letter-spacing:-0.5px">ХБК 1</div>
<div class="t" style="left:579px;top:524px;">A-</div>
<div class="t" style="left:652px;top:524px;width:60px;text-align:right;letter-spacing:-0.6px">Тариф Т3</div>
<div class="t n" style="left:718px;top:524px;">02.05.2021</div>
<div class="t n" style="left:796px;top:524px;">27.05.2021</div>
<div style="left:1735px;top:525px;width:11px;height:11px;background:#fff;border:1px solid #333"></div>
<div class="t" style="left:1787px;top:524px;width:38px;overflow:hidden">Нет наличия</div>
<div style="left:1106px;top:544px;width:113px;height:23px;background:#ffff00;"></div>
<div style="left:1220px;top:544px;width:106px;height:23px;background:#ffff00;"></div>
<div style="left:31px;top:549px;width:11px;height:11px;background:#fff;border:1px solid #333"></div>
<div class="btn" style="left:66px;top:546px;width:66px">Рассчитать</div>
<div class="btn" style="left:136px;top:546px;width:48px">Данные</div>
<div class="t" style="left:193px;top:548px;">Пример показаний</div>
<div class="t" style="left:342px;top:548px;letter-spacing:-0.5px">ХБК 1</div>
<div class="t" style="left:579px;top:548px;">A-</div>
<div class="t" style="left:652px;top:548px;width:60px;text-align:right;letter-spacing:-0.6px">Тариф Т4</div>
<div class="t n" style="left:718px;top:548px;">02.05.2021</div>
<div class="t n" style="left:796px;top:548px;">27.05.2021</div>
<div style="left:1735px;top:549px;width:11px;height:11px;background:#fff;border:1px solid #333"></div>
<div class="t" style="left:1787px;top:548px;width:38px;overflow:hidden">Нет наличия</div>
<div style="left:1106px;top:568px;width:113px;height:23px;background:#ffff00;"></div>
<div style="left:1220px;top:568px;width:106px;height:23px;background:#ffff00;"></div>
<div style="left:31px;top:573px;width:11px;height:11px;background:#fff;border:1px solid #333"></div>
<div class="btn" style="left:66px;top:570px;width:66px">Рассчитать</div>
<div class="btn" style="left:136px;top:570px;width:48px">Данные</div>
<div class="t" style="left:193px;top:572px;">Пример показаний</div>
<div class="t" style="left:342px;top:572px;letter-spacing:-0.5px">ХБК 1</div>
<div class="t" style="left:579px;top:572px;">R+</div>
<div class="t" style="left:652px;top:572px;width:60px;text-align:right;">Общий</div>
<div class="t n" style="left:718px;top:572px;">02.05.2021</div>
<div class="t n" style="left:796px;top:572px;">27.05.2021</div>
<div style="left:1735px;top:573px;width:11px;height:11px;background:#fff;border:1px solid #333"></div>
<div class="t" style="left:1787px;top:572px;width:38px;overflow:hidden">Нет наличия</div>
<div style="left:1106px;top:592px;width:113px;height:23px;background:#ffff00;"></div>
<div style="left:1220px;top:592px;width:106px;height:23px;background:#ffff00;"></div>
<div style="left:31px;top:597px;width:11px;height:11px;background:#fff;border:1px solid #333"></div>
<div class="btn" style="left:66px;top:594px;width:66px">Рассчитать</div>
<div class="btn" style="left:136px;top:594px;width:48px">Данные</div>
<div class="t" style="left:193px;top:596px;">Пример показаний</div>
<div class="t" style="left:342px;top:596px;letter-spacing:-0.5px">ХБК 1</div>
<div class="t" style="left:579px;top:596px;">R+</div>
<div class="t" style="left:652px;top:596px;width:60px;text-align:right;letter-spacing:-0.6px">Тариф Т1</div>
<div class="t n" style="left:718px;top:596px;">02.05.2021</div>
<div class="t n" style="left:796px;top:596px;">27.05.2021</div>
<div style="left:1735px;top:597px;width:11px;height:11px;background:#fff;border:1px solid #333"></div>
<div class="t" style="left:1787px;top:596px;width:38px;overflow:hidden">Нет наличия</div>
<div style="left:1106px;top:616px;width:113px;height:23px;background:#ffff00;"></div>
<div style="left:1220px;top:616px;width:106px;height:23px;background:#ffff00;"></div>
<div style="left:31px;top:621px;width:11px;height:11px;background:#fff;border:1px solid #333"></div>
<div class="btn" style="left:66px;top:618px;width:66px">Рассчитать</div>
<div class="btn" style="left:136px;top:618px;width:48px">Данные</div>
<div class="t" style="left:193px;top:620px;">Пример показаний</div>
<div class="t" style="left:342px;top:620px;letter-spacing:-0.5px">ХБК 1</div>
<div class="t" style="left:579px;top:620px;">R+</div>
<div class="t" style="left:652px;top:620px;width:60px;text-align:right;letter-spacing:-0.6px">Тариф Т2</div>
<div class="t n" style="left:718px;top:620px;">02.05.2021</div>
<div class="t n" style="left:796px;top:620px;">27.05.2021</div>
<div style="left:1735px;top:621px;width:11px;height:11px;background:#fff;border:1px solid #333"></div>
<div class="t" style="left:1787px;top:620px;width:38px;overflow:hidden">Нет наличия</div>
<div style="left:1106px;top:640px;width:113px;height:23px;background:#ffff00;"></div>
<div style="left:1220px;top:640px;width:106px;height:23px;background:#ffff00;"></div>
<div style="left:31px;top:645px;width:11px;height:11px;background:#fff;border:1px solid #333"></div>
<div class="btn" style="left:66px;top:642px;width:66px">Рассчитать</div>
<div class="btn" style="left:136px;top:642px;width:48px">Данные</div>
<div class="t" style="left:193px;top:644px;">Пример показаний</div>
<div class="t" style="left:342px;top:644px;letter-spacing:-0.5px">ХБК 1</div>
<div class="t" style="left:579px;top:644px;">R+</div>
<div class="t" style="left:652px;top:644px;width:60px;text-align:right;letter-spacing:-0.6px">Тариф Т3</div>
<div class="t n" style="left:718px;top:644px;">02.05.2021</div>
<div class="t n" style="left:796px;top:644px;">27.05.2021</div>
<div style="left:1735px;top:645px;width:11px;height:11px;background:#fff;border:1px solid #333"></div>
<div class="t" style="left:1787px;top:644px;width:38px;overflow:hidden">Нет наличия</div>
<div style="left:1106px;top:664px;width:113px;height:23px;background:#ffff00;"></div>
<div style="left:1220px;top:664px;width:106px;height:23px;background:#ffff00;"></div>
<div style="left:31px;top:669px;width:11px;height:11px;background:#fff;border:1px solid #333"></div>
<div class="btn" style="left:66px;top:666px;width:66px">Рассчитать</div>
<div class="btn" style="left:136px;top:666px;width:48px">Данные</div>
<div class="t" style="left:193px;top:668px;">Пример показаний</div>
<div class="t" style="left:342px;top:668px;letter-spacing:-0.5px">ХБК 1</div>
<div class="t" style="left:579px;top:668px;">R+</div>
<div class="t" style="left:652px;top:668px;width:60px;text-align:right;letter-spacing:-0.6px">Тариф Т4</div>
<div class="t n" style="left:718px;top:668px;">02.05.2021</div>
<div class="t n" style="left:796px;top:668px;">27.05.2021</div>
<div style="left:1735px;top:669px;width:11px;height:11px;background:#fff;border:1px solid #333"></div>
<div class="t" style="left:1787px;top:668px;width:38px;overflow:hidden">Нет наличия</div>
<div style="left:1106px;top:688px;width:113px;height:23px;background:#ffff00;"></div>
<div style="left:1220px;top:688px;width:106px;height:23px;background:#ffff00;"></div>
<div style="left:31px;top:693px;width:11px;height:11px;background:#fff;border:1px solid #333"></div>
<div class="btn" style="left:66px;top:690px;width:66px">Рассчитать</div>
<div class="btn" style="left:136px;top:690px;width:48px">Данные</div>
<div class="t" style="left:193px;top:692px;">Пример показаний</div>
<div class="t" style="left:342px;top:692px;letter-spacing:-0.5px">ХБК 1</div>
<div class="t" style="left:579px;top:692px;">R-</div>
<div class="t" style="left:652px;top:692px;width:60px;text-align:right;">Общий</div>
<div class="t n" style="left:718px;top:692px;">02.05.2021</div>
<div class="t n" style="left:796px;top:692px;">27.05.2021</div>
<div style="left:1735px;top:693px;width:11px;height:11px;background:#fff;border:1px solid #333"></div>
<div class="t" style="left:1787px;top:692px;width:38px;overflow:hidden">Нет наличия</div>
<div style="left:1106px;top:712px;width:113px;height:23px;background:#ffff00;"></div>
<div style="left:1220px;top:712px;width:106px;height:23px;background:#ffff00;"></div>
<div style="left:31px;top:717px;width:11px;height:11px;background:#fff;border:1px solid #333"></div>
<div class="btn" style="left:66px;top:714px;width:66px">Рассчитать</div>
<div class="btn" style="left:136px;top:714px;width:48px">Данные</div>
<div class="t" style="left:193px;top:716px;">Пример показаний</div>
<div class="t" style="left:342px;top:716px;letter-spacing:-0.5px">ХБК 1</div>
<div class="t" style="left:579px;top:716px;">R-</div>
<div class="t" style="left:652px;top:716px;width:60px;text-align:right;letter-spacing:-0.6px">Тариф Т1</div>
<div class="t n" style="left:718px;top:716px;">02.05.2021</div>
<div class="t n" style="left:796px;top:716px;">27.05.2021</div>
<div style="left:1735px;top:717px;width:11px;height:11px;background:#fff;border:1px solid #333"></div>
<div class="t" style="left:1787px;top:716px;width:38px;overflow:hidden">Нет наличия</div>
<div style="left:1327px;top:400px;width:96px;height:21px;border:1px dotted #000"></div>
<svg style="left:3px;top:406px" width="6" height="10" viewBox="0 0 6 10"><path d="M1 1l4 4-4 4z" fill="#000"/></svg>
</div>
<div style="left:11px;top:1010px;width:1898px;height:19px;background:#f0f0f0"></div>
<div style="left:12px;top:1011px;width:14px;height:15px;border:1px solid #c4c4c4;background:#f0f0f0"></div>
<svg style="left:13px;top:1012px" width="14" height="15" viewBox="0 0 14 15"><path d="M2.5 4v7" stroke="#222" stroke-width="1.4"/><path d="M7.5 4L3.5 7.5 7.5 11zM11.5 4L7.5 7.5 11.5 11z" fill="#222"/></svg>
<div style="left:30px;top:1011px;width:14px;height:15px;border:1px solid #c4c4c4;background:#f0f0f0"></div>
<svg style="left:31px;top:1012px" width="14" height="15" viewBox="0 0 14 15"><path d="M6.5 4L2.5 7.5 6.5 11zM10.5 4L6.5 7.5 10.5 11z" fill="#222"/></svg>
<div style="left:48px;top:1011px;width:14px;height:15px;border:1px solid #c4c4c4;background:#f0f0f0"></div>
<svg style="left:49px;top:1012px" width="14" height="15" viewBox="0 0 14 15"><path d="M8.5 4.5L5 7.5 8.5 10.5z" fill="#222"/></svg>
<div style="left:66px;top:1011px;width:14px;height:15px;border:1px solid #c4c4c4;background:#f0f0f0"></div>
<svg style="left:67px;top:1012px" width="14" height="15" viewBox="0 0 14 15"><path d="M5.5 4.5L9 7.5 5.5 10.5z" fill="#222"/></svg>
<div style="left:84px;top:1011px;width:14px;height:15px;border:1px solid #c4c4c4;background:#f0f0f0"></div>
<svg style="left:85px;top:1012px" width="14" height="15" viewBox="0 0 14 15"><path d="M3.5 4L7.5 7.5 3.5 11zM7.5 4L11.5 7.5 7.5 11z" fill="#222"/></svg>
<div style="left:102px;top:1011px;width:14px;height:15px;border:1px solid #c4c4c4;background:#f0f0f0"></div>
<svg style="left:103px;top:1012px" width="14" height="15" viewBox="0 0 14 15"><path d="M2.5 4L6.5 7.5 2.5 11zM6.5 4L10.5 7.5 6.5 11z" fill="#222"/><path d="M11.5 4v7" stroke="#222" stroke-width="1.4"/></svg>
<div style="left:120px;top:1011px;width:14px;height:15px;border:1px solid #c4c4c4;background:#f0f0f0"></div>
<svg style="left:121px;top:1012px" width="14" height="15" viewBox="0 0 14 15"><path d="M2.5 9.5a4.5 4 0 0 1 7.5-2.5" fill="none" stroke="#333" stroke-width="1.5"/><path d="M12 5.5v5h-5z" fill="#333"/></svg>
<div style="left:138px;top:1011px;width:14px;height:15px;border:1px solid #c4c4c4;background:#f0f0f0"></div>
<svg style="left:139px;top:1012px" width="14" height="15" viewBox="0 0 14 15"><path d="M7 3v9M2.5 7.5h9M3.8 4.3l6.4 6.4M10.2 4.3l-6.4 6.4" stroke="#111" stroke-width="1.1"/></svg>
<div style="left:156px;top:1011px;width:14px;height:15px;border:1px solid #c4c4c4;background:#d9d9d9"></div>
<svg style="left:157px;top:1012px" width="14" height="15" viewBox="0 0 14 15"><path d="M8 5v8M4 9h8M5.2 6.2l5.6 5.6M10.8 6.2l-5.6 5.6" stroke="#aaa" stroke-width="1.2"/><path d="M2 3l3 2.5-3 1z" fill="#999"/></svg>
<div style="left:174px;top:1011px;width:14px;height:15px;border:1px solid #c4c4c4;background:#f0f0f0"></div>
<svg style="left:175px;top:1012px" width="14" height="15" viewBox="0 0 14 15"><path d="M3.5 4.5h7v2l-2 2v3h-3v-3l-2-2z" fill="#f07010"/><path d="M4.5 5.5h5" stroke="#fff" stroke-width="0.9"/></svg>
<div style="left:192px;top:1011px;width:14px;height:15px;border:1px solid #c4c4c4;background:#f0f0f0"></div>
<svg style="left:193px;top:1012px" width="14" height="15" viewBox="0 0 14 15"><rect x="1" y="1.5" width="12" height="12" fill="#fff"/><path d="M2 5h7l1.5 1.5V12.5H2z" fill="#2f5aa0"/><rect x="3.5" y="9.3" width="5" height="2" fill="#fff"/><rect x="4" y="5.8" width="3.5" height="1.5" fill="#cfd8ea"/><path d="M6.5 5.5h2.5V3.3l3.8 3.2-3.8 3.2V7.5H6.5z" fill="#4cb84c" stroke="#2e8a2e" stroke-width="0.5"/></svg>
<div style="left:210px;top:1011px;width:14px;height:15px;border:1px solid #c4c4c4;background:#f0f0f0"></div>
<svg style="left:211px;top:1012px" width="14" height="15" viewBox="0 0 14 15"><rect x="1" y="1.5" width="12" height="12" fill="#fff"/><path d="M2.5 3.5h9v9h-9z" fill="none" stroke="#8aa6d8" stroke-width="0.8"/><path d="M5.5 3.5v9M8.5 3.5v9M2.5 6.5h9M2.5 9.5h9" stroke="#8aa6d8" stroke-width="0.8"/><rect x="2.5" y="6.5" width="3" height="3" fill="#e05a4a"/><rect x="5.5" y="3" width="3" height="3.5" fill="#f0b060"/><rect x="8.5" y="9.5" width="3" height="3" fill="#5cb85c"/></svg>
<div style="left:228px;top:1011px;width:14px;height:15px;border:1px solid #c4c4c4;background:#f0f0f0"></div>
<svg style="left:229px;top:1012px" width="14" height="15" viewBox="0 0 14 15"><rect x="1" y="1.5" width="12" height="12" fill="#fff"/><ellipse cx="4" cy="8.3" rx="2.3" ry="3.6" fill="#b8c8e4" stroke="#34558f" stroke-width="0.9"/><ellipse cx="10" cy="8.3" rx="2.3" ry="3.6" fill="#b8c8e4" stroke="#34558f" stroke-width="0.9"/><path d="M5.5 6.5h3" stroke="#34558f" stroke-width="1.2"/><path d="M3.5 9.5v1.5M9.5 9.5v1.5" stroke="#fff" stroke-width="0.9"/></svg>
<svg style="left:299px;top:1015px" width="8" height="9" viewBox="0 0 8 9"><path d="M6 1L2 4.5 6 8" fill="none" stroke="#b8b8b8" stroke-width="1.6"/></svg>
<svg style="left:1880px;top:1015px" width="8" height="9" viewBox="0 0 8 9"><path d="M2 1l4 3.5L2 8" fill="none" stroke="#b8b8b8" stroke-width="1.6"/></svg>
</body></html>
